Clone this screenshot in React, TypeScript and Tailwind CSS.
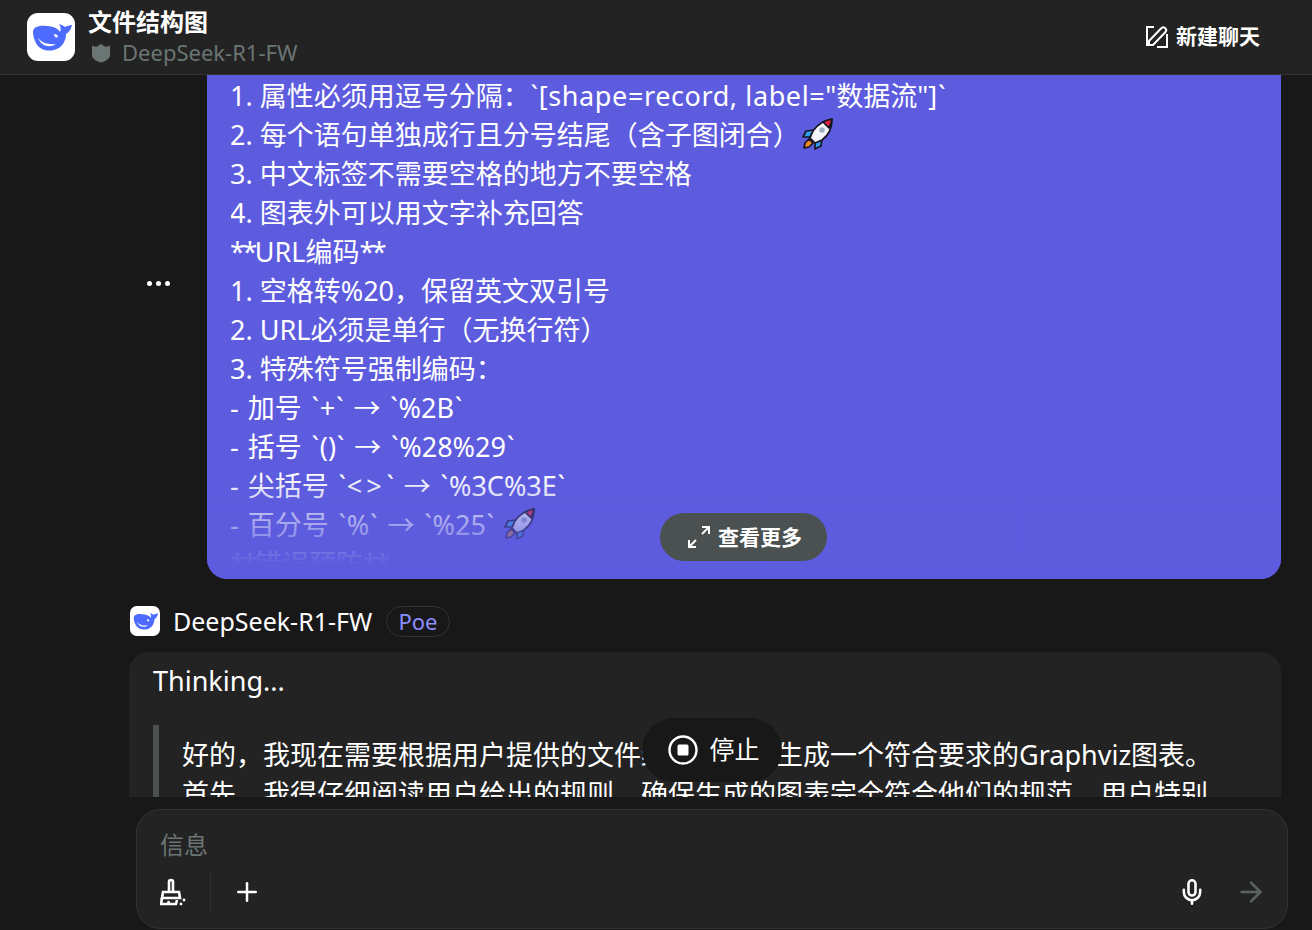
import { Mic, Plus, ArrowRight } from 'lucide-react';

const FONT = "font-['Noto_Sans','Noto_Sans_CJK_SC',sans-serif]";

const lines = [
  '1. 属性必须用逗号分隔：`[shape=record, label="数据流"]`',
  '2. 每个语句单独成行且分号结尾（含子图闭合）',
  '3. 中文标签不需要空格的地方不要空格',
  '4. 图表外可以用文字补充回答',
  '**URL编码**',
  '1. 空格转%20，保留英文双引号',
  '2. URL必须是单行（无换行符）',
  '3. 特殊符号强制编码：',
  '- 加号 `+` → `%2B`',
  '- 括号 `()` → `%28%29`',
  '- 尖括号 `<>` → `%3C%3E`',
  '- 百分号 `%` → `%25`',
  '**错误预防**',
];

// 反引号、星号等在原图里宽度不同，这里单独调一下
function Line({ text }: { text: string }) {
  const parts = text.split(/(`|\*\*|<>|\[shape=record, label=)/);
  return (
    <>
      {parts.map((p, i) => {
        if (p === '`') return <span key={i} className="mx-[0.75px]">{p}</span>;
        if (p === '**') return <span key={i} className="tracking-[-2.5px]">{p}</span>;
        if (p === '<>') return <span key={i} className="tracking-[4px]">{p}</span>;
        if (p.startsWith('[shape')) return <span key={i} className="tracking-[0.6px]">{p}</span>;
        return <span key={i}>{p}</span>;
      })}
    </>
  );
}

function Whale({ size }: { size: number }) {
  return (
    <svg width={size} height={size} viewBox="0 0 48 48" className="shrink-0">
      <rect width="48" height="48" rx="11" fill="#fff" />
      <path
        d="M6 19C6 14 12 12 19 13C25 13 31 15 33 19C34 16 34 14 32 11C35 12 37 13 38 14C40 13 42 12 45 12C44 17 41 20 39 21C39 28 35 35 27 37C19 39 12 36 9 30C7 26 6 23 6 19z"
        fill="#4d6bfe"
      />
      <path d="M11 25C15 30 21 32 29 31C23 35 15 34 11 25z" fill="#fff" />
      <path d="M27 21c2 0 4 1 4 3c-2 1-4 0-4-3z" fill="#fff" />
    </svg>
  );
}

function Rocket({ className }: { className: string }) {
  return (
    <svg width="34" height="34" viewBox="0 0 34 34" className={`inline-block align-[-6px] ${className}`}>
      <g stroke="#15151f" strokeWidth="1.700" strokeLinejoin="round">
        <path d="M8 22l4 4-4 4-5 1 1-5z" fill="#f08a24" />
        <path d="M13 13l-8 1-3 6 7 0z" fill="#2f9be8" />
        <path d="M21 21l-1 8-6 3 0-7z" fill="#2f9be8" />
        <path d="M31 2c-7 1-14 5-19 12l-3 7 5 5 7-3c7-5 10-12 10-21z" fill="#f4f6fb" />
        <path d="M31 2c-3 .500-6 1.500-9 3l6 6c1.500-3 2.500-6 3-9z" fill="#e0243c" />
      </g>
      <circle cx="21" cy="13" r="2.800" fill="#9fb0c4" />
    </svg>
  );
}

function Shield() {
  return (
    <svg width="20" height="20" viewBox="0 0 20 20" className="shrink-0">
      <path d="M1 2.500l4 1.500 5-3 5 3 4-1.500V12c0 4-5 6.500-9 7.500C6 18.500 1 16 1 12z" fill="#6b7573" />
    </svg>
  );
}

function Dots() {
  return (
    <div className="flex w-[77px] shrink-0 gap-[4px] pl-[17px]">
      <span className="h-[5px] w-[5px] rounded-full bg-white" />
      <span className="h-[5px] w-[5px] rounded-full bg-white" />
      <span className="h-[5px] w-[5px] rounded-full bg-white" />
    </div>
  );
}

export default function App() {
  return (
    <div className={`flex h-[930px] w-[1312px] flex-col overflow-hidden bg-[#181818] text-white ${FONT}`}>
      {/* 顶部栏 */}
      <header className="relative z-10 flex h-[75px] shrink-0 items-center justify-between border-b border-[#333] bg-[#232323] pl-[27px] pr-[52px]">
        <div className="flex items-center gap-[13px]">
          <Whale size={48} />
          <div className="-mt-[3px]">
            <div className="text-[24px] font-bold leading-[34px]">文件结构图</div>
            <div className="flex items-center gap-[11px] pl-[3px] text-[22px] leading-[27px] text-[#6b7573]">
              <Shield />
              <span>DeepSeek-R1-FW</span>
            </div>
          </div>
        </div>
        <div className="flex items-center gap-[7px] text-[21px] font-bold">
          <svg width="24" height="24" viewBox="0 0 24 24" fill="none" stroke="#fff" strokeWidth="2">
            <path d="M9 2H2v19" />
            <path d="M22 9v13H12" />
            <path d="M4 20v-4L16 3.500a2.400 2.400 0 0 1 4.500 3.500L8 20z" />
          </svg>
          <span>新建聊天</span>
        </div>
      </header>

      {/* 消息区 */}
      <main className="relative min-h-0 flex-1 overflow-hidden">
        <div className="-mt-[88px] flex items-center pl-[130px] pr-[31px]">
          <Dots />
          <div className="relative h-[592px] flex-1 overflow-hidden rounded-[20px] bg-[#5d5cde] pl-[24px] text-[27px] leading-[39px]">
            <div className="h-[578px] overflow-hidden pt-[89px]">
              {lines.map((line, i) => (
                <div key={i} className={`whitespace-nowrap -ml-[1px] ${i >= 8 && i < 12 ? '[word-spacing:2px]' : ''}`}>
                  <Line text={line} />
                  {i === 1 && <Rocket className="ml-[1px]" />}
                  {i === 11 && <Rocket className="ml-[8px]" />}
                </div>
              ))}
            </div>
            <div className="absolute inset-x-0 bottom-[14px] h-[90px] bg-gradient-to-b from-[#5d5cde00] to-[#5d5cde]" />
            <div className="absolute bottom-[18px] left-[453px] flex h-[48px] w-[167px] items-center justify-center gap-[8px] rounded-full bg-[#4a5150] pl-[3px] text-[21px] font-bold">
              <svg width="22" height="22" viewBox="0 0 22 22" fill="none" stroke="#fff" strokeWidth="2">
                <path d="M14 1h7v7M21 1l-7 7M8 21H1v-7M1 21l7-7" />
              </svg>
              <span>查看更多</span>
            </div>
          </div>
        </div>

        <div className="ml-[130px] mt-[27px] flex items-start">
          <Whale size={30} />
          <span className="ml-[13px] w-[201px] text-[25px] leading-[30px]">DeepSeek-R1-FW</span>
          <span className="ml-[12px] flex h-[31px] w-[64px] items-center justify-center rounded-full border border-[#333] text-[22px] text-[#8c8cff]">
            Poe
          </span>
        </div>

        <div className="ml-[129px] mr-[31px] mt-[15px] h-[300px] rounded-[20px] bg-[#232323] pl-[24px] pt-[9px] text-[27px] leading-[39px]">
          <div>Thinking...</div>
          <div className="mt-[25px] border-l-[6px] border-[#4a5150] pl-[23px] pt-[10px]">
            <div className="whitespace-nowrap">好的，我现在需要根据用户提供的文件结构信息，生成一个符合要求的Graphviz图表。</div>
            <div className="whitespace-nowrap">首先，我得仔细阅读用户给出的规则，确保生成的图表完全符合他们的规范。用户特别</div>
          </div>
        </div>

        <div className="absolute bottom-[15px] left-[642px] flex h-[64px] w-[140px] items-center justify-center gap-[11px] rounded-full bg-[#181818] pl-[4px] text-[25px]">
          <svg width="30" height="30" viewBox="0 0 30 30">
            <circle cx="15" cy="15" r="13.500" fill="none" stroke="#fff" strokeWidth="2.400" />
            <rect x="9.500" y="9.500" width="11" height="11" rx="1.500" fill="#fff" />
          </svg>
          <span>停止</span>
        </div>
      </main>

      {/* 输入框 */}
      <footer className="relative flex h-[133px] shrink-0 items-start bg-[#181818] pl-[136px] pr-[24px] pt-[12px]">
        <div className="flex h-[120px] flex-1 flex-col rounded-[24px] border border-[#333] bg-[#232323] pl-[23px] pr-[24px] pt-[18px]">
          <div className="text-[24px] leading-[33px] text-[#6b7573]">信息</div>
          <div className="mt-[13px] flex items-center">
            <svg width="26" height="28" viewBox="0 0 26 28" fill="none" stroke="#fff" strokeWidth="2.600" className="shrink-0">
              <path d="M9 13V4a2 2 0 0 1 4 0v9" />
              <path d="M3 14h16l1 6H2z" />
              <path d="M2 20l-1 6h15l1-4M8 26l1-3" />
              <circle cx="21" cy="26" r="1.400" fill="#fff" stroke="none" />
              <circle cx="24" cy="22" r="1.400" fill="#fff" stroke="none" />
            </svg>
            <div className="ml-[24px] h-[36px] w-px bg-[#333]" />
            <Plus size={30} strokeWidth={2} className="ml-[21px]" />
            <div className="flex-1" />
            <Mic size={28} strokeWidth={2.200} />
            <ArrowRight size={32} strokeWidth={2} className="ml-[29px] mr-[-4px] text-[#5a6361]" />
          </div>
        </div>
      </footer>
    </div>
  );
}
